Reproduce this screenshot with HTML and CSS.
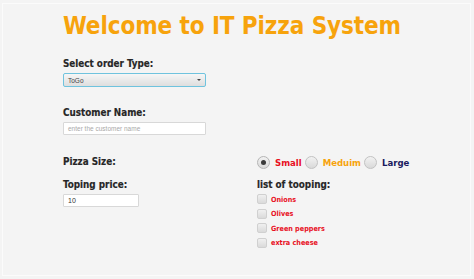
FILE: index.html
```html
<!DOCTYPE html>
<html>
<head>
<meta charset="utf-8">
<link rel="stylesheet" href="styles.css">
</head>
<body>
<div class="frame">
  <h1 class="title">Welcome to IT Pizza System</h1>
  <div class="field first">
    <div class="label">Select order Type:</div>
    <div class="combo"><span class="combo-text">ToGo</span><span class="arrow"></span></div>
  </div>
  <div class="field second">
    <div class="label">Customer Name:</div>
    <div class="text-input wide"><span class="placeholder">enter the customer name</span></div>
  </div>
  <div class="grid">
    <div class="label">Pizza Size:</div>
    <div class="radios">
      <div class="radio-item"><span class="radio selected"><span class="dot"></span></span><span class="opt red">Small</span></div>
      <div class="radio-item"><span class="radio"></span><span class="opt orange">Meduim</span></div>
      <div class="radio-item"><span class="radio"></span><span class="opt navy">Large</span></div>
    </div>
    <div class="col">
      <div class="label">Toping price:</div>
      <div class="text-input narrow"><span class="value">10</span></div>
    </div>
    <div class="col">
      <div class="label">list of tooping:</div>
      <div class="checks">
        <div class="check-item"><span class="box"></span><span class="chk-label">Onions</span></div>
        <div class="check-item"><span class="box"></span><span class="chk-label">Olives</span></div>
        <div class="check-item"><span class="box"></span><span class="chk-label">Green peppers</span></div>
        <div class="check-item"><span class="box"></span><span class="chk-label">extra cheese</span></div>
      </div>
    </div>
  </div>
</div>
</body>
</html>
```
FILE: styles.css
```css
html, body {
  margin: 0;
  padding: 0;
  background: #f4f4f4;
}
body {
  width: 474px;
  height: 279px;
  overflow: hidden;
  font-family: "DejaVu Sans Condensed", "DejaVu Sans", Verdana, sans-serif;
}
.frame {
  margin: 3px 3px 0 2px;
  height: 273px;
  border: 1px solid #fbfbfb;
  padding-left: 60px;
  box-sizing: border-box;
}
.title {
  margin: 6px 0 0 0;
  font-size: 24px;
  font-weight: bold;
  color: #f7a30c;
  line-height: 32px;
  letter-spacing: -0.1px;
}
.field {
  display: flex;
  flex-direction: column;
}
.first { margin-top: 15px; }
.second { margin-top: 19px; }
.label {
  font-size: 9.8px;
  font-weight: bold;
  color: #262626;
  line-height: 13px;
  -webkit-text-stroke: 0.15px #262626;
}
.combo {
  margin-top: 3px;
  width: 143px;
  height: 14px;
  box-sizing: border-box;
  border: 1px solid #6fc3de;
  border-radius: 2px;
  background: linear-gradient(#f6f6f6, #dedede);
  display: flex;
  align-items: center;
  justify-content: space-between;
  padding: 0 4px 0 4px;
}
.combo-text {
  font-family: "Liberation Sans", Arial, sans-serif;
  font-size: 6.5px;
  color: #444;
}
.arrow {
  width: 0; height: 0;
  border-left: 2px solid transparent;
  border-right: 2px solid transparent;
  border-top: 2px solid #444;
}
.text-input {
  margin-top: 3px;
  height: 13px;
  box-sizing: border-box;
  background: #fff;
  border: 1px solid #d8d8d8;
  border-radius: 1px;
  display: flex;
  align-items: center;
  padding-left: 4px;
  font-family: "Liberation Sans", Arial, sans-serif;
}
.wide { width: 143px; }
.narrow { width: 76px; }
.placeholder { font-size: 6.5px; color: #a9a9a9; }
.value { font-size: 7px; color: #333; }
.grid {
  margin-top: 18px;
  display: grid;
  grid-template-columns: 194px auto;
  row-gap: 9px;
  align-items: center;
}
.radios {
  display: flex;
  align-items: center;
  gap: 3px;
  padding-top: 3px;
}
.radio-item { display: flex; align-items: center; gap: 5px; }
.radio {
  width: 13px; height: 13px;
  border-radius: 50%;
  box-sizing: border-box;
  border: 1px solid #c2c2c2;
  background: linear-gradient(#f2f2f2, #d9d9d9);
  display: flex; align-items: center; justify-content: center;
}
.radio.selected { border-color: #b5b5b5; }
.dot { width: 5px; height: 5px; border-radius: 50%; background: #3a3a3a; }
.opt { font-size: 9.5px; font-weight: bold; }
.red { color: #e8101e; }
.orange { color: #f7a30c; }
.navy { color: #1a1a5e; }
.col { display: flex; flex-direction: column; align-self: start; }
.checks { display: flex; flex-direction: column; gap: 4.5px; margin-top: 3px; }
.check-item { display: flex; align-items: center; gap: 4px; height: 10px; }
.box {
  width: 10px; height: 10px;
  box-sizing: border-box;
  border: 1px solid #d0d0d0;
  border-radius: 2px;
  background: linear-gradient(#f0f0f0, #dadada);
}
.chk-label { font-size: 7.2px; font-weight: bold; color: #e8101e; }
```
